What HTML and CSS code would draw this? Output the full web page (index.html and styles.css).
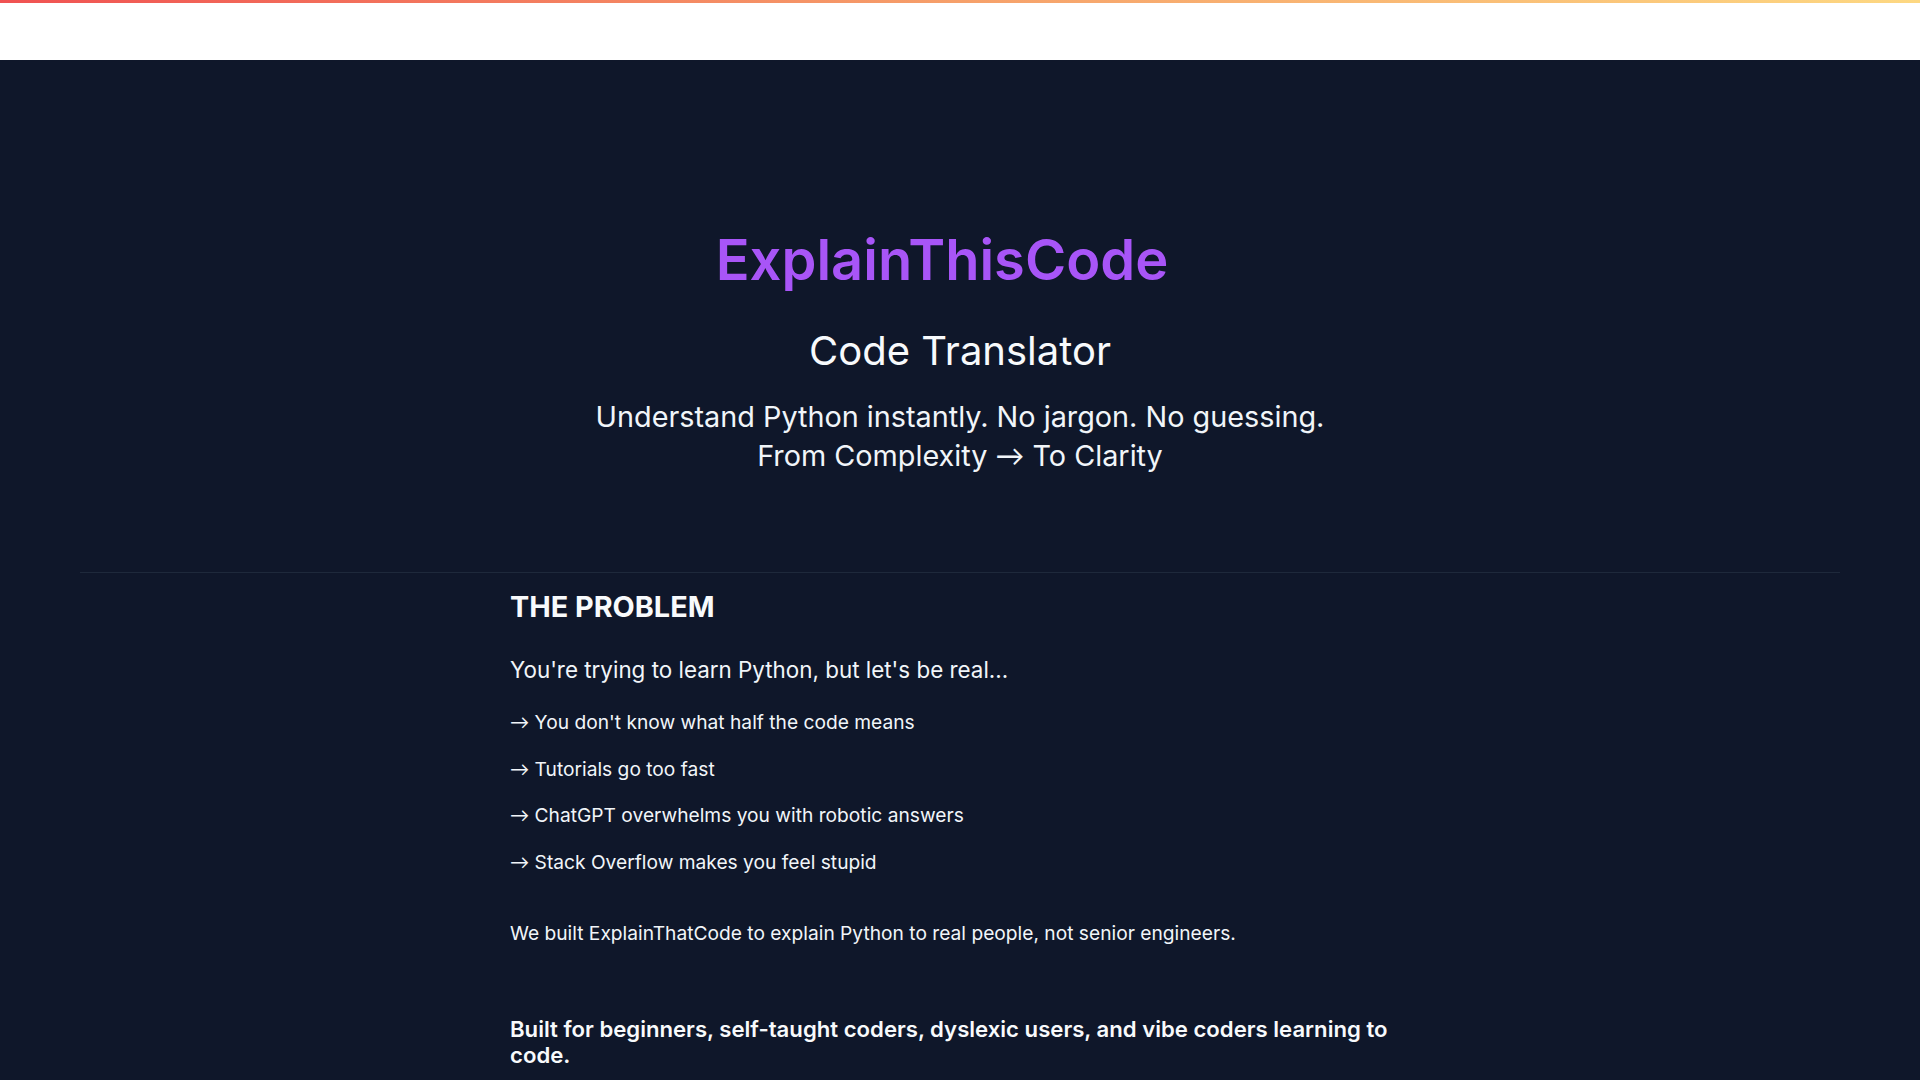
FILE: index.html
```html
<!DOCTYPE html>
<html lang="en">
<head>
<meta charset="utf-8">
<title>ExplainThisCode – Code Translator</title>
<link rel="stylesheet" href="styles.css">
</head>
<body>
<header class="topbar">
  <div class="accent"></div>
  <div class="bar"></div>
</header>
<main>
  <section class="hero">
    <h1 class="brand"><span class="brand-text">ExplainThisCode</span></h1>
    <h2 class="tagline">Code Translator</h2>
    <p class="lead">Understand Python instantly. No jargon. No guessing.<br>From Complexity <span class="arrow">→</span> To Clarity</p>
  </section>
  <hr class="divider">
  <section class="problem">
    <h3 class="section-title">THE PROBLEM</h3>
    <p class="intro">You're trying to learn Python, but let's be real...</p>
    <ul class="pain-list">
      <li><span class="arrow">→</span> You don't know what half the code means</li>
      <li><span class="arrow">→</span> Tutorials go too fast</li>
      <li><span class="arrow">→</span> ChatGPT overwhelms you with robotic answers</li>
      <li><span class="arrow">→</span> Stack Overflow makes you feel stupid</li>
    </ul>
    <p class="mission">We built ExplainThatCode to explain Python to real people, not senior engineers.</p>
    <p class="audience">Built for beginners, self-taught coders, dyslexic users, and vibe coders learning to code.</p>
  </section>
</main>
</body>
</html>
```
FILE: styles.css
```css
* { box-sizing: border-box; }
html, body { margin: 0; padding: 0; }
body {
  background: #0f172a;
  color: #f1f5f9;
  font-family: Inter, "Noto Sans", "Liberation Sans", sans-serif;
  overflow: hidden;
}
.topbar { height: 60px; display: flex; flex-direction: column; }
.accent {
  height: 3px;
  background: linear-gradient(90deg, #f05252 0%, #f6a06a 50%, #fdd882 100%);
}
.bar { flex: 1; background: #ffffff; }

.arrow { font-family: Lato, sans-serif; font-weight: 400; line-height: 0; }

.hero { text-align: center; padding-top: 167px; }
.brand {
  margin: 0;
  font-size: 56px;
  line-height: 67px;
  font-weight: 600;
  color: #a855f7;
}
.brand-text { display: inline-block; margin-right: 36px; }
.tagline {
  margin: 33px 0 0;
  font-size: 40px;
  line-height: 48px;
  font-weight: 400;
  color: #f8fafc;
}
.lead {
  margin: 22px 0 0;
  font-size: 28.8px;
  line-height: 39px;
  color: #f1f5f9;
}
.divider {
  margin: 97px 80px 0;
  border: 0;
  height: 1px;
  background: #1e293b;
}
.problem { width: 900px; margin: 0 auto; padding-top: 17px; }
.section-title {
  margin: 0;
  font-size: 28.8px;
  line-height: 34px;
  font-weight: 700;
  color: #f8fafc;
}
.intro {
  margin: 29px 0 0;
  font-size: 22.4px;
  line-height: 34px;
  color: #f1f5f9;
}
.pain-list {
  list-style: none;
  margin: 19px 0 0;
  padding: 0;
  display: flex;
  flex-direction: column;
  gap: 14.6px;
}
.pain-list li { font-size: 19.2px; line-height: 32px; color: #f1f5f9; }
.mission {
  margin: 39px 0 0;
  font-size: 19.2px;
  line-height: 32px;
  color: #f1f5f9;
}
.audience {
  margin: 67.5px 0 0;
  font-size: 22.15px;
  line-height: 26px;
  font-weight: 600;
  color: #f8fafc;
}
```
